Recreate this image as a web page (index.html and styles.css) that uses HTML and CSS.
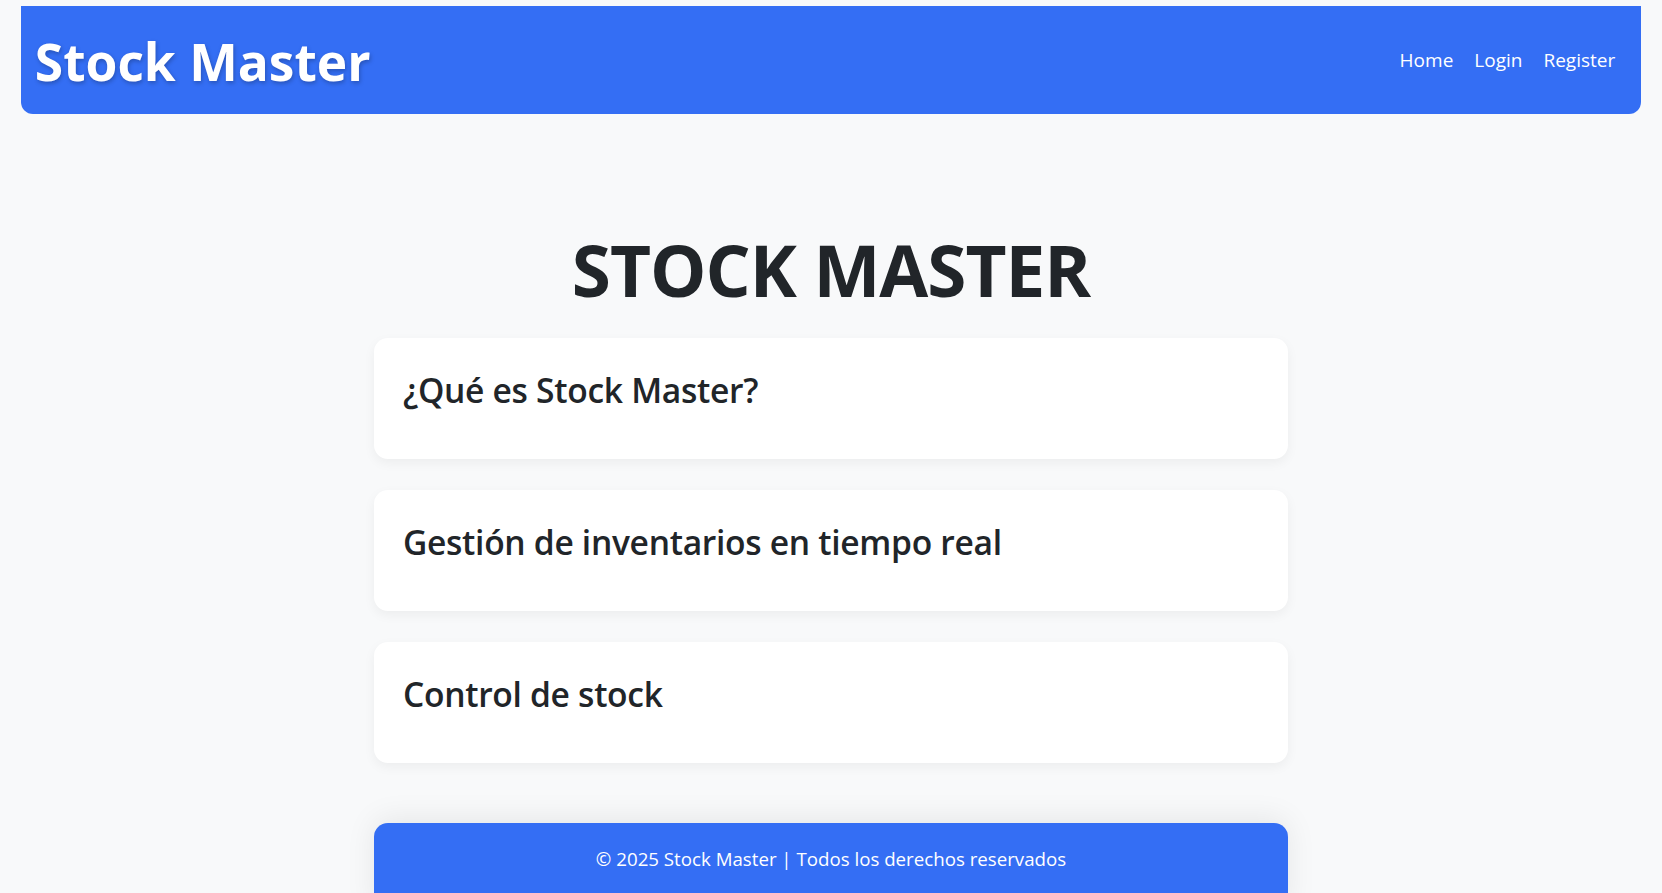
FILE: index.html
```html
<!DOCTYPE html>
<html lang="es">
<head>
<meta charset="utf-8">
<title>Stock Master</title>
<link rel="stylesheet" href="styles.css">
</head>
<body>
<header class="topbar">
  <div class="brand">Stock Master</div>
  <nav class="nav">
    <a href="#">Home</a>
    <a href="#">Login</a>
    <a href="#">Register</a>
  </nav>
</header>
<main class="main">
  <h1 class="title">STOCK MASTER</h1>
  <section class="card"><h2>¿Qué es Stock Master?</h2></section>
  <section class="card"><h2>Gestión de inventarios en tiempo real</h2></section>
  <section class="card"><h2>Control de stock</h2></section>
</main>
<footer class="footer">© 2025 Stock Master | Todos los derechos reservados</footer>
</body>
</html>
```
FILE: styles.css
```css
html, body {
  margin: 0;
  padding: 0;
}
body {
  background: #f8f9fa;
  color: #212529;
  font-family: "Open Sans", "Noto Sans", sans-serif;
  overflow: hidden;
}
.topbar {
  width: 97.5%;
  height: 108px;
  margin: 6px auto 0;
  box-sizing: border-box;
  background: #346ef4;
  border-radius: 0 0 12px 12px;
  display: flex;
  align-items: center;
  justify-content: space-between;
  padding: 0 26px 0 14px;
}
.brand {
  color: #fff;
  font-size: 51.5px;
  font-weight: 700;
  text-shadow: 1px 2px 4px rgba(0, 0, 0, 0.25);
  padding-top: 2px;
}
.nav {
  display: flex;
  gap: 21px;
}
.nav a {
  color: #fff;
  text-decoration: none;
  font-size: 19px;
}
.main {
  display: flex;
  flex-direction: column;
  align-items: center;
}
.title {
  margin: 113px 0 26px;
  font-size: 71px;
  font-weight: 700;
  line-height: 1.2;
  letter-spacing: -1px;
}
.card {
  width: 55%;
  box-sizing: border-box;
  background: #fff;
  border-radius: 14px;
  box-shadow: 0 4px 12px rgba(0, 0, 0, 0.05);
  padding: 33px 29px 50px;
  margin-bottom: 31px;
}
.card h2 {
  margin: 0;
  font-size: 33.6px;
  font-weight: 600;
  line-height: 38px;
  letter-spacing: -0.3px;
}
.footer {
  width: 55%;
  box-sizing: border-box;
  margin: 29px auto 0;
  background: #346ef4;
  color: #fff;
  border-radius: 14px 14px 0 0;
  box-shadow: 0 -4px 30px rgba(0, 0, 0, 0.08);
  text-align: center;
  font-size: 18.7px;
  padding: 23px 20px 40px;
}
```
